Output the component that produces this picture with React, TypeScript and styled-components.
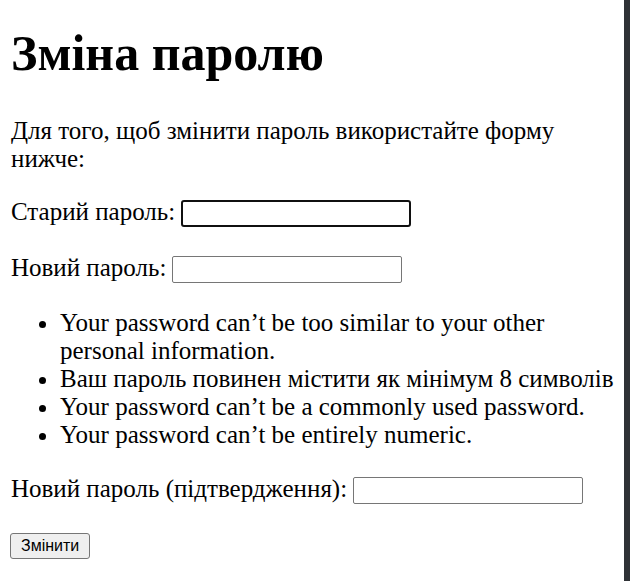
import React from 'react';
import styled, { createGlobalStyle } from 'styled-components';

const GlobalStyle = createGlobalStyle`
  html, body {
    margin: 0;
    padding: 0;
    background: #ffffff;
  }
  body {
    font-family: 'Liberation Serif', 'Times New Roman', serif;
    font-size: 25px;
    line-height: 28px;
    color: #000;
  }
`;

const Page = styled.div`
  display: flex;
  min-height: 581px;
`;

const Main = styled.main`
  flex: 1;
  display: flex;
  flex-direction: column;
  padding: 24px 8px 0 11px;
`;

const SideStrip = styled.div`
  width: 6px;
  flex-shrink: 0;
  background: #2f3236;
`;

const Title = styled.h1`
  margin: 0 0 35px;
  font-size: 50px;
  font-weight: bold;
  line-height: normal;
`;

const Intro = styled.p`
  margin: 0 0 25px;
`;

const Form = styled.form`
  display: flex;
  flex-direction: column;
`;

const FieldRow = styled.div<{ $gap?: number }>`
  display: flex;
  align-items: flex-start;
  gap: 6px;
  margin-bottom: ${p => p.$gap ?? 27}px;
`;

const Label = styled.label`
  white-space: nowrap;
`;

const TextInput = styled.input<{ $focused?: boolean }>`
  box-sizing: border-box;
  width: 230px;
  height: 27px;
  margin: 2px 0 0;
  padding: 0 4px;
  border: ${p => (p.$focused ? '2px solid #101010' : '1px solid #767676')};
  border-radius: ${p => (p.$focused ? '3px' : '2px')};
  background: #fff;
  font-family: 'Liberation Sans', Arial, sans-serif;
  font-size: 16px;
  outline: none;
`;

const HelpList = styled.ul`
  margin: 0 0 26px;
  padding-left: 49px;
  list-style: disc;
`;

const SubmitButton = styled.button`
  align-self: flex-start;
  margin: 2px 0 0 -1px;
  padding: 3px 10px;
  border: 1px solid #767676;
  border-radius: 3px;
  background: #efefef;
  color: #000;
  font-family: 'Liberation Sans', Arial, sans-serif;
  font-size: 16px;
  line-height: 18px;
`;

const rules = [
  'Your password can\u2019t be too similar to your other personal information.',
  'Ваш пароль повинен містити як мінімум 8 символів',
  'Your password can\u2019t be a commonly used password.',
  'Your password can\u2019t be entirely numeric.',
];

export default function App() {
  return (
    <Page>
      <GlobalStyle />
      <Main>
        <Title>Зміна паролю</Title>
        <Intro>Для того, щоб змінити пароль використайте форму нижче:</Intro>
        <Form onSubmit={e => e.preventDefault()}>
          <FieldRow>
            <Label htmlFor="old_password">Старий пароль:</Label>
            <TextInput id="old_password" type="password" $focused />
          </FieldRow>
          <FieldRow $gap={26}>
            <Label htmlFor="new_password1">Новий пароль:</Label>
            <TextInput id="new_password1" type="password" />
          </FieldRow>
          <HelpList>
            {rules.map((r, i) => <li key={'rule_' + i}>{r}</li>)}
          </HelpList>
          <FieldRow>
            <Label htmlFor="new_password2">Новий пароль (підтвердження):</Label>
            <TextInput id="new_password2" type="password" />
          </FieldRow>
          <SubmitButton type="submit">Змінити</SubmitButton>
        </Form>
      </Main>
      <SideStrip />
    </Page>
  );
}
